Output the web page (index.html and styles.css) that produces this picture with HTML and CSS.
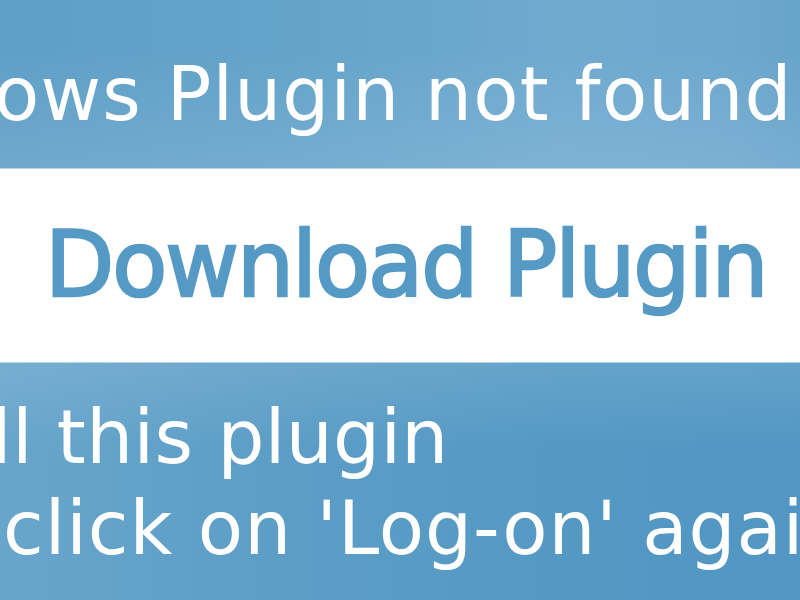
FILE: index.html
```html
<!DOCTYPE html>
<html>
<head>
<meta charset="utf-8">
<link rel="stylesheet" href="styles.css">
</head>
<body>
<div class="page">
  <div class="top">
    <p class="line line-title">ows Plugin not found</p>
  </div>
  <div class="band">
    <a class="download">Download Plugin</a>
  </div>
  <div class="bottom">
    <p class="line line-a">ll this plugin</p>
    <p class="line line-b">click on 'Log-on' again</p>
  </div>
</div>
</body>
</html>
```
FILE: styles.css
```css
html, body {
  margin: 0;
  padding: 0;
}
body {
  width: 800px;
  height: 600px;
  overflow: hidden;
  background: #5599c4;
  font-family: "DejaVu Sans", "Verdana", sans-serif;
}
.page {
  width: 800px;
  height: 600px;
  display: flex;
  flex-direction: column;
  overflow: hidden;
}
.line {
  margin: 0;
  white-space: nowrap;
  color: #ffffff;
  font-size: 74px;
  line-height: 86px;
  letter-spacing: 0.4px;
}
.top {
  height: 169px;
  box-sizing: border-box;
  padding-top: 51px;
  border-bottom: 1px solid #b3d3e6;
  background:
    linear-gradient(180deg, rgba(255,255,255,0) 30%, rgba(255,255,255,0.10) 100%),
    linear-gradient(90deg, #5f9fc7 0%, #64a3ca 35%, #6faacf 70%, #6ea8ce 90%, #67a4cb 100%);
  overflow: hidden;
}
.line-title {
  margin-left: -6px;
  letter-spacing: 1.2px;
}
.band {
  height: 193px;
  box-sizing: border-box;
  background: #ffffff;
  padding-top: 43px;
  padding-left: 45px;
}
.download {
  display: block;
  white-space: nowrap;
  color: #559ac5;
  font-size: 90px;
  line-height: 105px;
  letter-spacing: -2px;
  -webkit-text-stroke: 2.5px #559ac5;
}
.bottom {
  flex: 1;
  border-top: 1px solid #b3d3e6;
  padding-top: 29px;
  background:
    linear-gradient(180deg, rgba(255,255,255,0.10) 0%, rgba(255,255,255,0) 35%),
    linear-gradient(90deg, #68a5cb 0%, #5b9dc6 40%, #5499c4 70%, #5297c3 100%);
  overflow: hidden;
}
.bottom .line {
  line-height: 91px;
}
.line-a {
  margin-left: -9px;
}
.line-b {
  margin-left: 3px;
  letter-spacing: 1px;
}
```
